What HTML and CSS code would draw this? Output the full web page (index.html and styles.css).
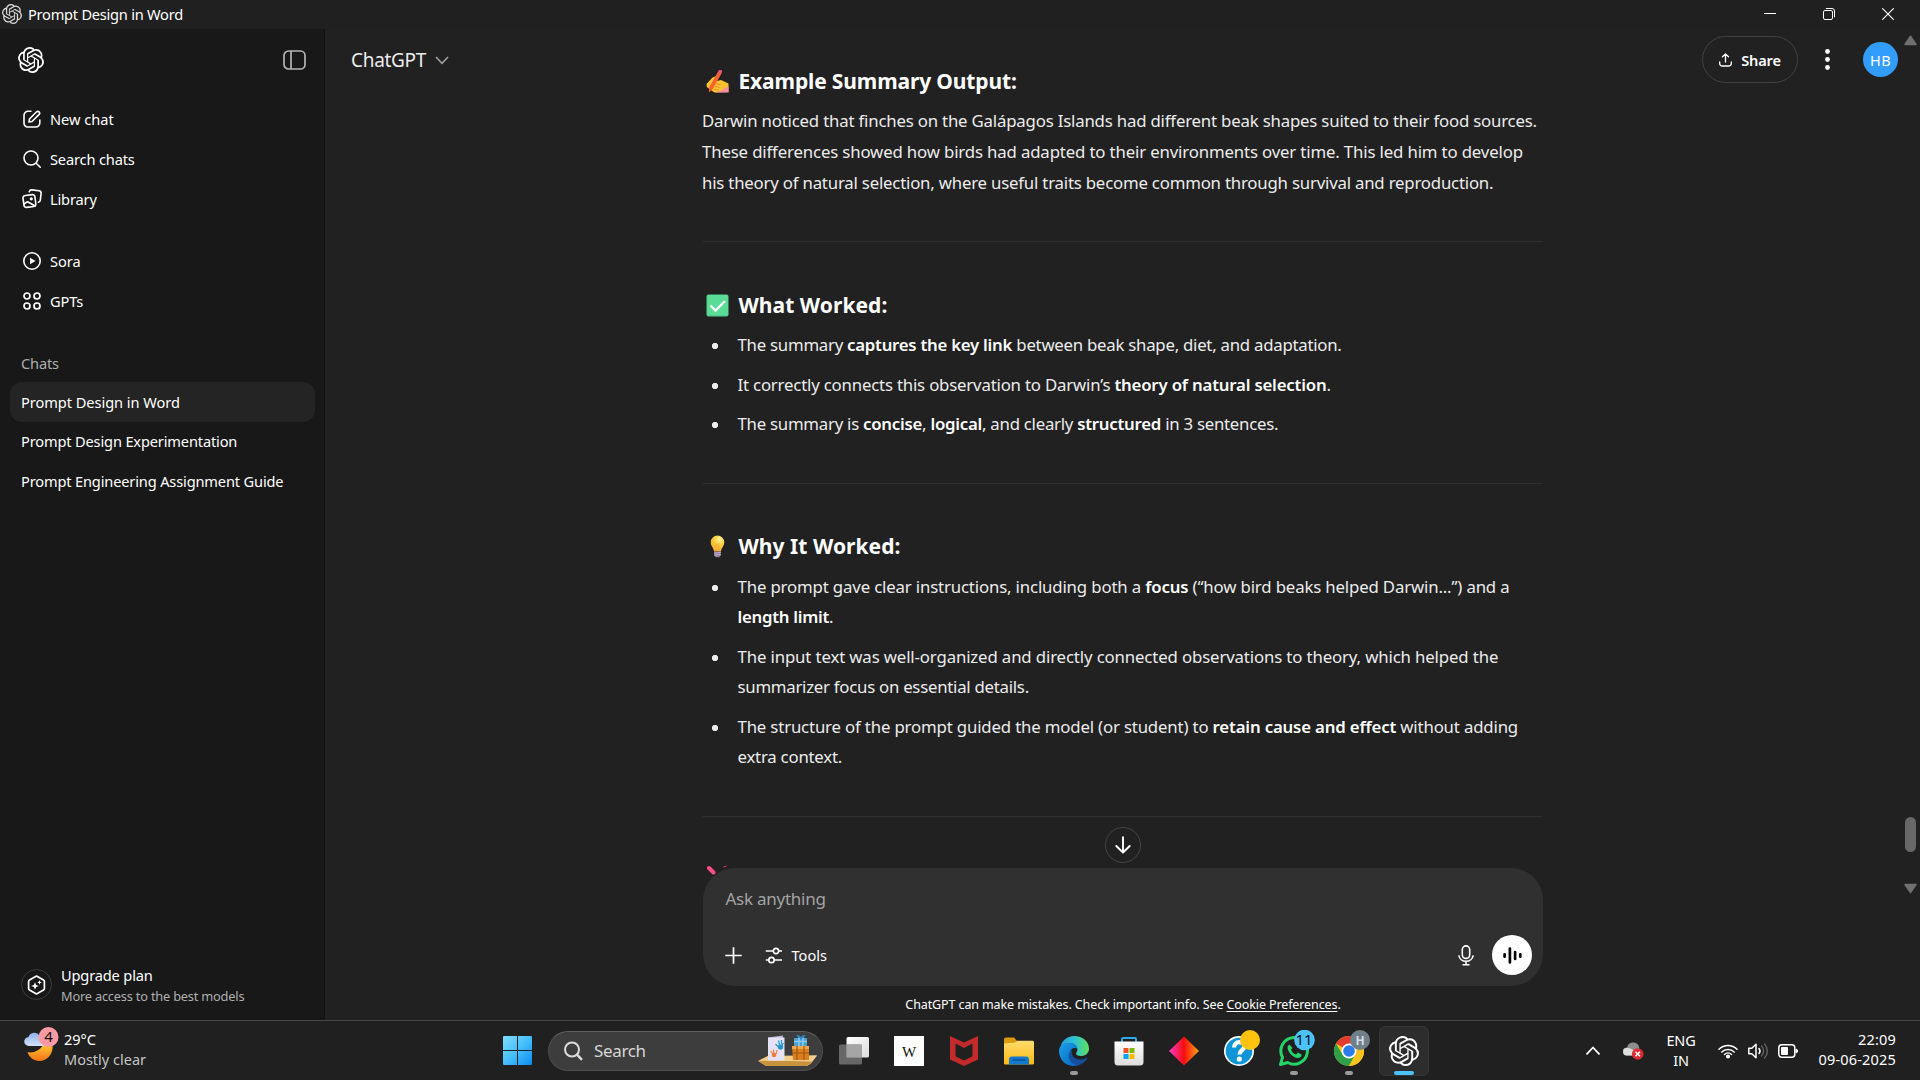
FILE: index.html
```html
<!DOCTYPE html>
<html lang="en">
<head>
<meta charset="utf-8">
<title>Prompt Design in Word</title>
<link rel="stylesheet" href="styles.css">
</head>
<body>
<svg class="defs" width="0" height="0" aria-hidden="true">
  <symbol id="knot" viewBox="0 0 24 24"><path fill="currentColor" d="M22.2819 9.8211a5.9847 5.9847 0 0 0-.5157-4.9108 6.0462 6.0462 0 0 0-6.5098-2.9A6.0651 6.0651 0 0 0 4.9807 4.1818a5.9847 5.9847 0 0 0-3.9977 2.9 6.0462 6.0462 0 0 0 .7427 7.0966 5.98 5.98 0 0 0 .511 4.9107 6.051 6.051 0 0 0 6.5146 2.9001A5.9847 5.9847 0 0 0 13.2599 24a6.0557 6.0557 0 0 0 5.7718-4.2058 5.9894 5.9894 0 0 0 3.9977-2.9001 6.0557 6.0557 0 0 0-.7475-7.0729zm-9.022 12.6081a4.4755 4.4755 0 0 1-2.8764-1.0408l.1419-.0804 4.7783-2.7582a.7948.7948 0 0 0 .3927-.6813v-6.7369l2.02 1.1686a.071.071 0 0 1 .038.052v5.5826a4.504 4.504 0 0 1-4.4945 4.4944zm-9.6607-4.1254a4.4708 4.4708 0 0 1-.5346-3.0137l.142.0852 4.783 2.7582a.7712.7712 0 0 0 .7806 0l5.8428-3.3685v2.3324a.0804.0804 0 0 1-.0332.0615L9.74 19.9502a4.4992 4.4992 0 0 1-6.1408-1.6464zM2.3408 7.8956a4.485 4.485 0 0 1 2.3655-1.9728V11.6a.7664.7664 0 0 0 .3879.6765l5.8144 3.3543-2.0201 1.1685a.0757.0757 0 0 1-.071 0l-4.8303-2.7865A4.504 4.504 0 0 1 2.3408 7.872zm16.5963 3.8558L13.1038 8.364 15.1192 7.2a.0757.0757 0 0 1 .071 0l4.8303 2.7913a4.4944 4.4944 0 0 1-.6765 8.1042v-5.6772a.79.79 0 0 0-.407-.667zm2.0107-3.0231l-.142-.0852-4.7735-2.7818a.7759.7759 0 0 0-.7854 0L9.409 9.2297V6.8974a.0662.0662 0 0 1 .0284-.0615l4.8303-2.7866a4.4992 4.4992 0 0 1 6.6802 4.66zM8.3065 12.863l-2.02-1.1638a.0804.0804 0 0 1-.038-.0567V6.0742a4.4992 4.4992 0 0 1 7.3757-3.4537l-.142.0805L8.704 5.459a.7948.7948 0 0 0-.3927.6813zm1.0976-2.3654l2.602-1.4998 2.6069 1.4998v2.9994l-2.5974 1.4997-2.6067-1.4997Z"/></symbol>
</svg>

<header class="titlebar">
  <svg class="title-logo" width="20" height="20"><use href="#knot"/></svg>
  <span class="t title-text">Prompt Design in Word</span>
  <div class="window-buttons">
    <svg width="12" height="12" viewBox="0 0 12 12"><path d="M0 5.5h12" stroke="#fff" stroke-width="1"/></svg>
    <svg width="12" height="12" viewBox="0 0 12 12" fill="none" stroke="#fff"><rect x=".5" y="2.5" width="9" height="9" rx="1.5"/><path d="M2.8.5H9a2.5 2.5 0 0 1 2.5 2.5v6.3"/></svg>
    <svg width="12" height="12" viewBox="0 0 12 12" stroke="#fff" stroke-width="1.1"><path d="M.3.3l11.4 11.4M11.7.3L.3 11.7"/></svg>
  </div>
</header>

<div class="app">
  <aside class="sidebar">
    <div class="side-top">
      <svg width="26" height="26"><use href="#knot"/></svg>
      <svg class="toggle" width="23" height="20" viewBox="0 0 23 20" fill="none" stroke="#b4b4b4" stroke-width="1.7"><rect x="1" y="1" width="21" height="18" rx="4.5"/><path d="M8 1v18"/></svg>
    </div>
    <nav class="nav">
      <a class="nav-row"><svg width="18" height="18" viewBox="0 0 18 18" fill="none" stroke="#fff" stroke-width="1.6" stroke-linecap="round"><path d="M8 1.3H5A4 4 0 0 0 1 5.300v8A3.700 3.700 0 0 0 4.700 17h8A4 4 0 0 0 16.800 13v-3"/><path d="M6 12l.5-3L13.600 1.800a1.850 1.850 0 0 1 2.600 2.600L9 11.500z" stroke-linejoin="round"/></svg><span class="t n1">New chat</span></a>
      <a class="nav-row"><svg width="18" height="18" viewBox="0 0 18 18" fill="none" stroke="#fff" stroke-width="1.6" stroke-linecap="round"><circle cx="8" cy="8" r="7"/><path d="M13.200 13.200L17.200 17.200"/></svg><span class="t n2">Search chats</span></a>
      <a class="nav-row"><svg class="wide" width="20" height="20" viewBox="0 0 20 20" fill="none" stroke="#fff" stroke-width="1.6" stroke-linecap="round" stroke-linejoin="round"><path d="M3.300 6.500l7-.9a2.300 2.300 0 0 1 2.600 2l.9 7.300a2.300 2.300 0 0 1-2 2.600l-7.200.9a2.300 2.300 0 0 1-2.600-2L1 9.100a2.300 2.300 0 0 1 2.300-2.600z"/><path d="M7.300 2.700A2.500 2.500 0 0 1 10 .9l7 .9a2.500 2.500 0 0 1 2.100 2.800l-.8 6.600a2.500 2.500 0 0 1-1.900 2.100M2 15l3.500-2.300L13.300 17"/><circle cx="9.300" cy="9.800" r=".8" fill="#fff"/></svg><span class="t n3">Library</span></a>
      <a class="nav-row spaced"><svg width="18" height="18" viewBox="0 0 18 18" fill="none" stroke="#fff" stroke-width="1.6"><circle cx="9" cy="9" r="8.200"/><path d="M7 5.800v6.400L12.500 9z" fill="#fff" stroke="none"/></svg><span class="t n4">Sora</span></a>
      <a class="nav-row"><svg width="18" height="18" viewBox="0 0 18 18" fill="none" stroke="#fff" stroke-width="1.700"><circle cx="4" cy="4" r="3"/><circle cx="14" cy="4" r="3"/><circle cx="4" cy="14" r="3"/><circle cx="14" cy="14" r="3"/></svg><span class="t n5">GPTs</span></a>
    </nav>
    <section class="chats">
      <h2 class="chats-title"><span class="t">Chats</span></h2>
      <a class="chat-row active"><span class="t">Prompt Design in Word</span></a>
      <a class="chat-row"><span class="t">Prompt Design Experimentation</span></a>
      <a class="chat-row"><span class="t">Prompt Engineering Assignment Guide</span></a>
    </section>
    <div class="upgrade">
      <span class="upgrade-icon"><svg width="19" height="20" viewBox="0 0 19 20"><path d="M9.500 1l7 4a1.800 1.800 0 0 1 .9 1.500v7a1.800 1.800 0 0 1-.9 1.500l-7 4-7-4a1.800 1.800 0 0 1-.9-1.500v-7A1.800 1.800 0 0 1 2.500 5z" fill="none" stroke="#fff" stroke-width="1.700" stroke-linejoin="round"/><path d="M8 7.200l1.100 2.700L11.800 11 9.100 12.100 8 14.800 6.900 12.100 4.200 11l2.700-1.100zM12.500 5l.7 1.700 1.700.7-1.700.7-.7 1.700-.7-1.700-1.700-.7 1.700-.7z" fill="#fff"/></svg></span>
      <div class="upgrade-text"><span class="t up1">Upgrade plan</span><span class="t up2">More access to the best models</span></div>
    </div>
  </aside>

  <main class="main">
    <div class="topbar">
      <div class="model"><span class="t">ChatGPT</span><svg width="14" height="9" viewBox="0 0 14 9" fill="none" stroke="#a0a0a0" stroke-width="1.600"><path d="M1 1l6 6.300L13 1"/></svg></div>
      <div class="actions">
        <button class="share"><svg width="13" height="14" viewBox="0 0 13 14" fill="none" stroke="#fff" stroke-width="1.300" stroke-linecap="round" stroke-linejoin="round"><path d="M6.500 9V1M3.500 3.800L6.500 1l3 2.800M.7 9v1.500A2.500 2.500 0 0 0 3.200 13h6.600a2.500 2.500 0 0 0 2.500-2.500V9"/></svg><span class="t">Share</span></button>
        <svg class="dots" width="5" height="21" viewBox="0 0 5 21" fill="#fff"><circle cx="2.500" cy="2.500" r="2.400"/><circle cx="2.500" cy="10.500" r="2.400"/><circle cx="2.500" cy="18.500" r="2.400"/></svg>
        <span class="avatar"><span class="t">HB</span></span>
      </div>
    </div>

    <article class="thread">
      <h3 class="head"><svg width="23" height="23" viewBox="0 0 23 23"><path d="M.5 14L6.500 7.500l4-1.500 2 1.500-1.500 3.500 4-1 7.500 3.500V22l-14 .5L4 19.500.8 17z" fill="#fdc02f"/><path d="M9 22.500l6-2 7.500-4.500v6.500z" fill="#fb8f9b"/><path d="M9.500 13.500l5 1.200M9 16.500l4.500 1M8.500 19.500l4 .3" stroke="#e88b2a" stroke-width=".9"/><path d="M11.700 2.200l3.500 1.800L6.500 19.200l-3.700 3.300.5-5.200z" fill="#f8602f"/><path d="M12.300 1.200A1.800 1.800 0 0 1 16 2.300L15 4.500l-3.500-2z" fill="#f0566b"/></svg><span class="t h1">Example Summary Output:</span></h3>
      <p class="para"><span class="t p1">Darwin noticed that finches on the Galápagos Islands had different beak shapes suited to their food sources.</span><span class="t p2">These differences showed how birds had adapted to their environments over time. This led him to develop</span><span class="t p3">his theory of natural selection, where useful traits become common through survival and reproduction.</span></p>
      <hr>
      <h3 class="head"><svg width="23" height="23" viewBox="0 0 23 23"><rect x=".5" y=".5" width="22" height="22" rx="2" fill="#4fd08c"/><rect x="1.500" y="1" width="20.500" height="20" rx="1.500" fill="#5bdc96"/><path d="M4.500 11.500l5 5L19 7" fill="none" stroke="#fff" stroke-width="2.300"/></svg><span class="t h2">What Worked:</span></h3>
      <ul class="list">
        <li><span class="t l1">The summary <b>captures the key link</b> between beak shape, diet, and adaptation.</span></li>
        <li><span class="t l2">It correctly connects this observation to Darwin’s <b>theory of natural selection</b>.</span></li>
        <li><span class="t l3">The summary is <b>concise</b>, <b>logical</b>, and clearly <b>structured</b> in 3 sentences.</span></li>
      </ul>
      <hr class="low">
      <h3 class="head"><svg width="23" height="23" viewBox="0 0 23 23"><defs><radialGradient id="bulb" cx=".65" cy=".25" r=".8"><stop offset="0" stop-color="#fff3a0"/><stop offset=".4" stop-color="#ffd445"/><stop offset="1" stop-color="#f7a429"/></radialGradient></defs><path d="M11.500.5a6.800 6.800 0 0 1 6.800 6.800c0 3.700-2.700 5-3.300 9.200H8C7.400 12.300 4.700 11 4.700 7.300A6.800 6.800 0 0 1 11.500.5z" fill="url(#bulb)"/><path d="M9.500 8.500l1.500 1.300.5-1 .5 1 1.500-1.300M10 10v6M13 10v6" stroke="#f3a12c" stroke-width=".8" fill="none"/><path d="M8.200 16.500h6.600v3.800l-1.500 1.900H9.700l-1.500-1.900z" fill="#8f7a9f"/><path d="M8.200 18.200l6.600-.8M8.200 20.200l6.600-.8" stroke="#c9b8d2" stroke-width=".9"/></svg><span class="t h3">Why It Worked:</span></h3>
      <ul class="list">
        <li><span class="t l4">The prompt gave clear instructions, including both a <b>focus</b> (“how bird beaks helped Darwin...”) and a</span><span class="t l5"><b>length limit</b>.</span></li>
        <li><span class="t l6">The input text was well-organized and directly connected observations to theory, which helped the</span><span class="t l7">summarizer focus on essential details.</span></li>
        <li><span class="t l8">The structure of the prompt guided the model (or student) to <b>retain cause and effect</b> without adding</span><span class="t l9">extra context.</span></li>
      </ul>
      <hr>
      <svg class="pin" width="24" height="10" viewBox="0 0 24 10"><path d="M3 3l4.500 4.500" stroke="#ff4f86" stroke-width="4" stroke-linecap="round"/><path d="M17.500 2l3-1" stroke="#e0407a" stroke-width="1"/></svg>
    </article>

    <div class="jump"><svg width="16" height="18" viewBox="0 0 16 18" fill="none" stroke="#fff" stroke-width="1.900" stroke-linecap="round" stroke-linejoin="round"><path d="M8 1.200v15M1.300 10L8 16.500 14.700 10"/></svg></div>

    <div class="dock">
      <div class="composer">
        <span class="t placeholder">Ask anything</span>
        <div class="tools">
          <svg width="17" height="17" viewBox="0 0 17 17" stroke="#fff" stroke-width="1.700"><path d="M8.500.3v16.400M.3 8.500h16.400"/></svg>
          <svg class="sliders" width="18" height="17" viewBox="0 0 18 17" fill="none" stroke="#fff" stroke-width="1.700"><path d="M.8 4h7.400M13.800 4H17M.8 13h2.900M9.300 13H17"/><circle cx="11" cy="4" r="2.700"/><circle cx="6.500" cy="13" r="2.700"/></svg>
          <span class="t tools-label">Tools</span>
          <svg class="mic" width="16" height="21" viewBox="0 0 16 21" fill="none" stroke="#fff" stroke-width="1.600"><rect x="4.300" y=".9" width="7.400" height="12.500" rx="3.700"/><path d="M.8 10.300A7.300 7.300 0 0 0 8 16.300a7.300 7.300 0 0 0 7.200-6M8 16.300v3.500M4.500 19.800h7"/></svg>
          <span class="voice"><svg width="19" height="17" viewBox="0 0 19 17" stroke="#000" stroke-width="2.700" stroke-linecap="round"><path d="M1.600 7.300v2.400M6.900 1.600v13.800M12.100 5v7M17.300 7.300v2.400"/></svg></span>
        </div>
      </div>
      <p class="note"><span class="t">ChatGPT can make mistakes. Check important info. See <u>Cookie Preferences</u>.</span></p>
    </div>

    <div class="scrollbar">
      <svg width="13" height="11" viewBox="0 0 13 11"><path d="M6.500 1.200L12 9.500H1z" fill="#707070" stroke="#707070" stroke-width="1.500" stroke-linejoin="round"/></svg>
      <span class="thumb"></span>
      <svg width="13" height="11" viewBox="0 0 13 11"><path d="M6.500 9.500L12 1.500H1z" fill="#707070" stroke="#707070" stroke-width="1.500" stroke-linejoin="round"/></svg>
    </div>
  </main>
</div>

<footer class="taskbar">
  <div class="weather">
    <svg width="36" height="36" viewBox="0 0 36 36"><defs><linearGradient id="moon" x2="0" y2="1"><stop offset="0" stop-color="#ffc530"/><stop offset="1" stop-color="#f27318"/></linearGradient><linearGradient id="cl" x2="0" y2="1"><stop offset="0" stop-color="#8fb0ec"/><stop offset="1" stop-color="#d3e2fa"/></linearGradient></defs><path d="M4.500 25c5 1.500 12-1 15.500-7h9.500c1 9-5.500 16-13 16-6 0-10.500-4-12-9z" fill="url(#moon)"/><path d="M6 19a4.500 4.500 0 0 1-.5-9 6 6 0 0 1 11-1l6 10z" fill="url(#cl)"/><circle cx="25.500" cy="10" r="10" fill="#ff99a4"/><text class="badge" x="25.500" y="15" text-anchor="middle">4</text></svg>
    <div class="weather-text"><span class="t w1">29°C</span><span class="t w2">Mostly clear</span></div>
  </div>

  <div class="apps">
    <svg class="start" width="29" height="29" viewBox="0 0 29 29"><defs><linearGradient id="win" x2="1" y2="1"><stop offset="0" stop-color="#82dcff"/><stop offset=".5" stop-color="#45bffb"/><stop offset="1" stop-color="#0a8df0"/></linearGradient></defs><path d="M1 0h13v14H0V1a1 1 0 0 1 1-1zM15 0h13a1 1 0 0 1 1 1v13H15zM0 15h14v14H1a1 1 0 0 1-1-1zM15 15h14v13a1 1 0 0 1-1 1H15z" fill="url(#win)"/></svg>
    <div class="search">
      <svg width="20" height="20" viewBox="0 0 20 20" fill="none" stroke="#dcdcdc" stroke-width="2" stroke-linecap="round"><circle cx="9" cy="8.500" r="7"/><path d="M14 13.700l4.300 4.500" stroke-width="2.400"/></svg>
      <span class="t">Search</span>
      <svg class="art" width="60" height="32" viewBox="0 0 60 32"><path d="M0 26l10-5 49-.5-6 8-4 2.500H8z" fill="#e9bd74"/><path d="M0 26h54l-2 3-4 2H9z" fill="#c9923f"/><path d="M1 25.500l9-4.500 49-.5-5 6z" fill="#f2cd8c"/><path d="M10 2.500l15-2v22l-15 3z" fill="#b9b8d8"/><path d="M10 2.500h16.500v23H10z" fill="#e4e2f4"/><path d="M17.500 9l3 3M20.500 5.500l1 4M23.500 5v4M25.500 8l-2 3" stroke="#2497cf" stroke-width="1.200"/><circle cx="22.500" cy="12" r="2.700" fill="#2497cf"/><path d="M12.500 16l2.500 3M15.500 14.500l.3 4M19 15l-1 4" stroke="#f27a35" stroke-width="1.100"/><circle cx="16" cy="20" r="2.300" fill="#f27a35"/><path d="M36 3h13v10H36z" fill="#4d9fcf"/><path d="M41 1v12M45 1v12M36 6.500h13" stroke="#8bcaf0" stroke-width="1.500"/><path d="M39 0l4 3 4-3" stroke="#2d86c4" stroke-width="2" fill="none"/><path d="M34 11h17v14H35z" fill="#d9801f"/><path d="M34 11h17v3H34z" fill="#f0a64a"/><path d="M39 11v14M46 11v14M35 18h16" stroke="#a75512" stroke-width="1.200"/></svg>
    </div>
    <span class="slot"><svg width="30" height="28" viewBox="0 0 30 28"><defs><linearGradient id="tv" x2="1" y2="1"><stop offset="0" stop-color="#fff"/><stop offset="1" stop-color="#ddd"/></linearGradient></defs><rect x="7.500" width="22.500" height="20.500" rx="1.500" fill="url(#tv)"/><rect y="7.500" width="23" height="20" rx="1.500" fill="#747474" opacity=".85"/><path d="M7.500 7.500H23v13H7.500z" fill="#a5a5a5"/></svg></span>
    <span class="slot"><svg width="30" height="30" viewBox="0 0 30 30"><rect width="30" height="30" fill="#fff"/><text class="wiki" x="15" y="20.500" text-anchor="middle">W</text></svg></span>
    <span class="slot"><svg width="28" height="30" viewBox="0 0 28 30"><path d="M0 0l14 6.500L28 0v23.500L14 30 0 23.500zM5.500 7.500v12.800l8.500 4.200 8.500-4.200V7.500L14 12z" fill="#c32a2b" fill-rule="evenodd"/></svg></span>
    <span class="slot"><svg width="30" height="28" viewBox="0 0 30 28"><defs><linearGradient id="fo" x2="0" y2="1"><stop offset="0" stop-color="#ffdc6e"/><stop offset="1" stop-color="#fcb912"/></linearGradient></defs><path d="M0 2a1.500 1.500 0 0 1 1.500-1.500H10L13 4h-1v5H0z" fill="#dc9b0c"/><path d="M0 6.500L11 5.500 13 3.700h15.500A1.500 1.500 0 0 1 30 5.200V26.500a1 1 0 0 1-1 1H1a1 1 0 0 1-1-1z" fill="url(#fo)"/><path d="M5 27.500v-5a3 3 0 0 1 3-3h14a3 3 0 0 1 3 3v5z" fill="#1478cf"/><path d="M8.500 23h13" stroke="#07498c" stroke-width="1.200"/></svg></span>
    <span class="slot run"><svg width="30" height="30" viewBox="0 0 30 30"><defs><linearGradient id="e1"><stop offset="0" stop-color="#229de6"/><stop offset=".55" stop-color="#32c6cb"/><stop offset="1" stop-color="#5fe05a"/></linearGradient><linearGradient id="e2" x2="1" y2="1"><stop offset="0" stop-color="#1aa0ea"/><stop offset="1" stop-color="#0a62be"/></linearGradient></defs><path d="M1 13C2 5 8 0 15 0c9 0 15 6 15 12.500 0 5-4 7.500-8 7.500-3.500 0-5-1.500-5-2.500 0-.7 1.400-1.500 1.400-4C18.400 10 15 7 10.500 7 6 7 2 9 1 13z" fill="url(#e1)"/><path d="M0 15C0 10 5 6.800 10 6.800c5 0 8.400 3 8.400 6.700 0-2-7.400-3-7.400 4.500 0 6 5 11.500 9 11-13 4-20-6-20-14z" fill="url(#e2)"/><path d="M13 14c-7 4-2 16 7 15 4-1 7.500-5 8-6.500.3-.8-.5-1-1-.6C20 26 11 22 13 14z" fill="#14509b"/></svg></span>
    <span class="slot"><svg width="30" height="30" viewBox="0 0 30 30"><defs><linearGradient id="st" x2="0" y2="1"><stop offset="0" stop-color="#fff"/><stop offset="1" stop-color="#dcdcdc"/></linearGradient></defs><path d="M8 8V3a1 1 0 0 1 1-1h12a1 1 0 0 1 1 1v5" fill="none" stroke="#2cabe8" stroke-width="2"/><path d="M.5 5.500h29V26a3.500 3.500 0 0 1-3.500 3.500H4A3.500 3.500 0 0 1 .5 26z" fill="url(#st)"/><path d="M9.500 12h5v5h-5z" fill="#f25022"/><path d="M15.500 12h5v5h-5z" fill="#7fba00"/><path d="M9.500 18h5v5h-5z" fill="#00a4ef"/><path d="M15.500 18h5v5h-5z" fill="#ffb900"/></svg></span>
    <span class="slot"><svg width="30" height="30" viewBox="0 0 30 30"><defs><linearGradient id="di"><stop offset="0" stop-color="#ff3bd0"/><stop offset=".5" stop-color="#fb0d0d"/><stop offset="1" stop-color="#ffa31a"/></linearGradient></defs><path d="M15 .5L30 15 15 29.500 0 15z" fill="url(#di)"/></svg></span>
    <span class="slot"><svg width="42" height="42" viewBox="0 0 42 42"><circle cx="21" cy="21" r="15" fill="#fff"/><circle cx="21" cy="21" r="13.300" fill="#0e95d8"/><path d="M16 17.500c0-7 10.500-7 10.500-1.300 0 4-5 4-5 8.300" fill="none" stroke="#fff" stroke-width="4.300"/><circle cx="21.300" cy="29" r="2.600" fill="#fff"/><circle cx="32" cy="10" r="10" fill="#ffc20e"/></svg></span>
    <span class="slot run"><svg width="44" height="42" viewBox="0 0 44 42"><path d="M8.500 34.500l2-7.200A13.300 13.300 0 1 1 15.700 32.500z" fill="none" stroke="#25d366" stroke-width="3" stroke-linejoin="round"/><path d="M17.500 14.500c-2 1-2.500 3-1.500 5.500 2 4.500 5 7 9 8 2.500.5 5-1 4.500-3.500l-3.500-2-2 2c-2.500-.8-4-2.500-5-5l1.500-1.500z" fill="#25d366"/><circle cx="32.500" cy="10" r="10.300" fill="#4cc2ff"/><text class="badge" x="32" y="15.200" text-anchor="middle">11</text></svg></span>
    <span class="slot run"><svg width="42" height="42" viewBox="0 0 42 42"><circle cx="21" cy="21" r="15" fill="#fcc31e"/><path d="M21 21L8 13.500A15 15 0 0 1 34 13.500z" fill="#e33b2e"/><path d="M8 13.500A15 15 0 0 0 21 36l6.500-11.500-13 0z" fill="#2f9e48"/><path d="M21 13.500h13A15 15 0 0 1 21 36l6.500-11.500z" fill="#fcc31e"/><circle cx="21" cy="21" r="7.500" fill="#fff"/><circle cx="21" cy="21" r="5.800" fill="#2a7de8"/><circle cx="32" cy="10" r="10" fill="#70808b"/><text class="hbadge" x="32" y="14.500" text-anchor="middle">H</text></svg></span>
    <span class="slot current"><svg width="30" height="30"><use href="#knot"/></svg></span>
  </div>

  <div class="tray">
    <svg width="14" height="9" viewBox="0 0 14 9" fill="none" stroke="#fff" stroke-width="1.800" stroke-linecap="round" stroke-linejoin="round"><path d="M1 7.800L7 1.500l6 6.300"/></svg>
    <svg class="cloud" width="21" height="18" viewBox="0 0 21 18"><path d="M3.500 13.500a4 4 0 0 1 .5-8A6.300 6.300 0 0 1 16 4.500l1 9z" fill="#8e8e8e"/><path d="M3.500 13.500a3.800 3.800 0 0 1-.3-7.500C7 5.500 9 7 12 9v4.500z" fill="#dedede"/><circle cx="14.700" cy="12" r="5.800" fill="#dc2c34"/><path d="M12.500 9.800l4.400 4.400M16.900 9.800l-4.400 4.400" stroke="#fff" stroke-width="1.500"/></svg>
    <div class="lang"><span class="t g1">ENG</span><span class="t g2">IN</span></div>
    <svg class="wifi" width="20" height="16" viewBox="0 0 20 16" fill="none" stroke="#fff" stroke-width="1.500" stroke-linecap="round"><path d="M1 6.200a12.600 12.600 0 0 1 18 0M3.800 9a8.700 8.700 0 0 1 12.400 0M6.500 11.500a5 5 0 0 1 7 0"/><circle cx="10" cy="13.500" r="1.300" fill="#fff"/></svg>
    <svg class="speaker" width="21" height="18" viewBox="0 0 21 18" fill="none" stroke="#fff" stroke-width="1.500" stroke-linecap="round" stroke-linejoin="round"><path d="M.8 6.200h3L8 2.300v13.400l-4.200-3.900h-3z"/><path d="M11 6.500a4 4 0 0 1 0 5"/><path d="M13.500 4a7 7 0 0 1 0 10M16.500 2a10 10 0 0 1 0 14" stroke="#5c5c5c"/></svg>
    <svg class="battery" width="20" height="14" viewBox="0 0 20 14"><rect x=".8" y=".8" width="16" height="12.400" rx="3" fill="none" stroke="#fff" stroke-width="1.500"/><rect x="3" y="3" width="7" height="8" rx="1" fill="#fff"/><path d="M18 5v4l1.500-1V6z" fill="#fff" stroke="#fff"/></svg>
    <div class="clock"><span class="t c1">22:09</span><span class="t c2">09-06-2025</span></div>
  </div>
</footer>
</body>
</html>
```
FILE: styles.css
```css
* { box-sizing: border-box; }
body {
  margin: 0; width: 1920px; height: 1080px; overflow: hidden;
  display: flex; flex-direction: column;
  background: #212121; color: #fff;
  font-family: "Noto Sans", "Open Sans", sans-serif; font-size: 14.6px;
}
svg { display: block; flex: none; }
.defs { position: absolute; }
.t { white-space: pre; display: inline-block; }
h2, h3, p, ul { margin: 0; padding: 0; font-weight: 400; }

.titlebar { height: 29px; flex: none; display: flex; align-items: center; padding: 0 26px 2px 2px; background: #202020; }
.title-text { margin-left: 6px; letter-spacing: -.24px; }
.title-logo { color: #d8d8d8; }
.window-buttons { margin-left: auto; display: flex; gap: 47px; }

.app { height: 991px; flex: none; display: flex; }
.sidebar { width: 325px; flex: none; display: flex; flex-direction: column; background: #181818; border-right: 1px solid #111; letter-spacing: -.15px; }
.side-top { display: flex; align-items: center; justify-content: space-between; padding: 18px 18px 0; height: 44px; flex: none; }
.nav { padding: 26px 23px 0; }
.nav-row { display: flex; align-items: center; gap: 9px; height: 40px; }
.nav-row .wide { margin: 0 -1px; }
.nav-row.spaced { margin-top: 22px; }
.n1, .n4 { letter-spacing: 0; }
.chats { padding: 23px 9px 0 10px; }
.chats-title { height: 38px; padding-left: 11px; line-height: 38px; font-size: 14.6px; color: #afafaf; }
.chat-row { display: flex; align-items: center; height: 39.6px; padding-left: 11px; border-radius: 12px; }
.chat-row.active { background: #242424; letter-spacing: -.05px; }
.upgrade { margin-top: auto; height: 71px; padding: 0 21px; display: flex; align-items: center; gap: 9px; }
.upgrade-icon { width: 31px; height: 31px; border: 1px solid #3c3c3c; border-radius: 50%; display: grid; place-items: center; }
.upgrade-text { display: flex; flex-direction: column; align-items: flex-start; line-height: 20.5px; padding-top: 2px; }
.up2 { font-size: 12.8px; letter-spacing: -.2px; color: #afafaf; }

.main { flex: 1; position: relative; display: flex; flex-direction: column; }
.topbar { height: 28px; flex: none; display: flex; justify-content: space-between; padding: 0 22px 0 26px; }
.model { display: flex; align-items: center; gap: 9px; height: 62px; font-size: 19px; letter-spacing: -.3px; color: #ececec; }
.actions { display: flex; align-items: center; height: 61px; }
.share { width: 96px; height: 47px; padding: 0; border: 1px solid #424242; border-radius: 24px; background: none; color: #fff; display: flex; align-items: center; justify-content: center; gap: 9px; font: 600 14.6px "Noto Sans", "Open Sans", sans-serif; letter-spacing: -.2px; }
.dots { margin-left: 27px; }
.avatar { margin-left: 33px; width: 35px; height: 35px; border-radius: 50%; background: #339cff; display: grid; place-items: center; font-size: 14.5px; letter-spacing: .5px; }

.thread { width: 844px; height: 811px; flex: none; margin-left: 377px; font-size: 16.8px; line-height: 30.8px; color: #ececec; }
.head { display: flex; align-items: center; height: 31px; gap: 10px; padding-left: 3.5px; font-size: 21px; font-weight: 700; color: #fff; }
.thread > .head:first-child { margin-top: 9px; }
.para { margin-top: 9px; display: flex; flex-direction: column; align-items: flex-start; }
.thread hr { margin: 42.8px 3px 48px 1px; border: 0; height: 1px; background: #303030; }
.thread hr.low { margin: 43.8px 3px 47px 1px; }
.list { list-style: none; margin-top: 9.2px; display: flex; flex-direction: column; gap: 8.4px; }
.list li { display: flex; flex-direction: column; align-items: flex-start; padding-left: 35.5px; background: radial-gradient(circle at 13px 16px, #ececec 2.8px, transparent 3.5px); }
.list b { font-weight: 600; color: #fff; }
.h1 { letter-spacing: -.14px; }
.h2, .h3 { letter-spacing: .05px; }
.p1 { letter-spacing: -.188px; }
.p2 { letter-spacing: -.15px; }
.p3 { letter-spacing: -.2px; }
.l1 { letter-spacing: -.25px; }
.l2 { letter-spacing: -.19px; }
.l3 { letter-spacing: -.252px; }
.l4 { letter-spacing: -.154px; }
.l5 { letter-spacing: -.28px; }
.l6 { letter-spacing: -.135px; }
.l7 { letter-spacing: -.255px; }
.l8 { letter-spacing: -.164px; }
.l9 { letter-spacing: -.22px; }
.thread .pin { margin: 0 0 0 4px; }

.jump { position: absolute; left: 780px; top: 798px; width: 36px; height: 36px; border: 1px solid #454545; border-radius: 50%; background: #212121; display: grid; place-items: center; }
.dock { position: relative; width: 840px; margin-left: 378px; }
.composer { height: 118px; border-radius: 32px; background: #303030; padding: 17px 11px 0 22.5px; }
.placeholder { display: block; height: 28px; line-height: 28px; font-size: 17px; letter-spacing: -.25px; color: #a3a3a3; }
.tools { display: flex; align-items: center; height: 40px; margin: 22px 0 0 -1px; }
.sliders { margin-left: 23.5px; }
.tools-label { margin-left: 8.5px; }
.mic { margin-left: auto; }
.voice { margin-left: 18px; width: 40px; height: 40px; border-radius: 50%; background: #fff; display: grid; place-items: center; }
.note { text-align: center; font-size: 12.5px; letter-spacing: -.11px; line-height: 18px; margin-top: 10px; }
.note u { text-underline-offset: 2px; }
.scrollbar { position: absolute; right: 3px; top: 6px; width: 13px; height: 859px; display: flex; flex-direction: column; align-items: center; }
.thumb { width: 11px; height: 35px; border-radius: 6px; margin: 771px 0 auto; background: #686868; }

.taskbar { height: 60px; flex: none; border-top: 1px solid #484848; background: #202020; display: flex; align-items: flex-start; }
.weather { width: 503px; flex: none; display: flex; padding: 6px 0 0 23px; font-size: 14.5px; line-height: 20px; }
.weather-text { display: flex; flex-direction: column; align-items: flex-start; margin-left: 5px; padding-top: 2px; }
.w2 { color: #c4c4c4; }
.badge { font: 15px "Noto Sans", "Open Sans", sans-serif; fill: #101010; }
.hbadge { font: 700 12px "Noto Sans", "Open Sans", sans-serif; fill: #d5dde2; }
.wiki { font: 15px "Liberation Serif", serif; fill: #111; }
.apps { display: flex; align-items: center; height: 59px; flex: none; }
.search { width: 275px; height: 40px; margin: 0 6px 0 16px; border: 1px solid #4e4e4e; border-top-color: #606060; border-radius: 20px; background: #3d3d3d; display: flex; align-items: center; padding: 0 4px 0 14px; font-size: 17px; letter-spacing: -.35px; color: #d6d6d6; }
.search .t { margin-left: 11px; }
.art { margin-left: auto; }
.slot { width: 50px; height: 50px; margin-right: 5px; border-radius: 6px; display: grid; place-items: center; position: relative; }
.slot svg { grid-area: 1 / 1; margin: -6px; }
.slot.run::after, .current::after { content: ""; position: absolute; bottom: 1px; left: 21px; width: 8px; height: 4px; border-radius: 2px; background: #9a9a9a; }
.current { background: #2d2d2d; border: 1px solid #353535; }
.current::after { left: 14px; bottom: 0; width: 20px; background: #4cc2ff; }
.tray { margin-left: auto; height: 59px; display: flex; align-items: center; padding-right: 24px; font-size: 14.5px; line-height: 20px; }
.cloud { margin-left: 23px; }
.lang { margin-left: 22.5px; padding-bottom: 2px; letter-spacing: -.2px; display: flex; flex-direction: column; align-items: center; }
.wifi { margin-left: 22px; }
.speaker { margin-left: 10px; }
.battery { margin-left: 9px; }
.clock { margin-left: 21px; padding-bottom: 3px; letter-spacing: .18px; display: flex; flex-direction: column; align-items: flex-end; }
```
